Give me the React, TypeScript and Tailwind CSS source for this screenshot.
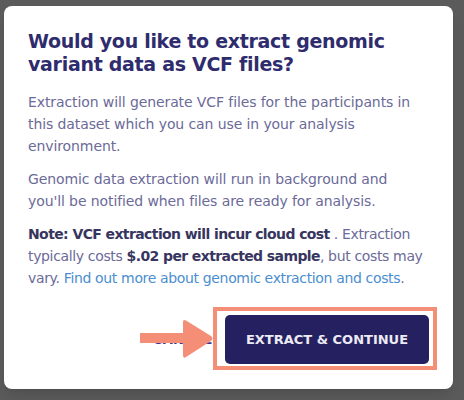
export default function App() {
  return (
    <div
      className="relative w-[464px] h-[400px] overflow-hidden bg-[#5b5b5b]"
      style={{ fontFamily: '"DejaVu Sans", "Open Sans", sans-serif' }}
    >
      {/* modal */}
      <div className="absolute left-[4px] top-[6px] w-[449px] h-[383px] bg-white rounded-[8px] shadow-lg flex flex-col px-6 pt-[24px] pb-[25px]">
        <h2 className="text-[19px] leading-[23px] font-semibold text-[#2f2c6e] tracking-[-0.3px]">
          Would you like to extract genomic variant data as VCF files?
        </h2>

        <div className="mt-[15px] text-[14px] leading-[22px] text-[#6b6a98] tracking-[-0.1px] space-y-[11px]">
          <p>
            Extraction will generate VCF files for the participants in this
            dataset which you can use in your analysis environment.
          </p>
          <p>
            Genomic data extraction will run in background and
            <br />
            you'll be notified when files are ready for analysis.
          </p>
          <p className="tracking-[-0.35px]">
            <span className="font-semibold text-[#37355f] tracking-[-0.6px]">
              Note: VCF extraction will incur cloud cost
            </span>{" "}
            . Extraction
            <br />
            typically costs{" "}
            <span className="font-semibold text-[#37355f] tracking-[-0.6px]">
              $.02 per extracted sample
            </span>
            , but costs may
            <br />
            vary.{" "}
            <a className="text-[#4b8ed0]">
              Find out more about genomic extraction and costs
            </a>
            .
          </p>
        </div>

        {/* footer */}
        <div className="mt-auto flex items-center justify-end gap-[13px]">
          <button className="px-0 text-[13px] font-semibold tracking-wide text-[#3a3890]">
            CANCEL
          </button>
          <button className="w-[204px] h-[49px] rounded-[5px] bg-[#252161] text-[13px] font-semibold text-[#ecebf4]">
            EXTRACT &amp; CONTINUE
          </button>
        </div>
      </div>

      {/* highlight box */}
      <div className="absolute left-[213px] top-[307px] w-[224px] h-[63px] border-4 border-[#f58e76]" />

      {/* arrow */}
      <svg
        className="absolute left-[140px] top-[319px]"
        width="74"
        height="40"
        viewBox="0 0 74 40"
      >
        <rect x="0" y="14" width="46" height="10" fill="#f58e76" />
        <path
          d="M43 3 Q43 0 46 1.5 L71 17 Q74 19.5 71 22 L46 38 Q43 40 43 36 Z"
          fill="#f58e76"
        />
      </svg>
    </div>
  );
}
